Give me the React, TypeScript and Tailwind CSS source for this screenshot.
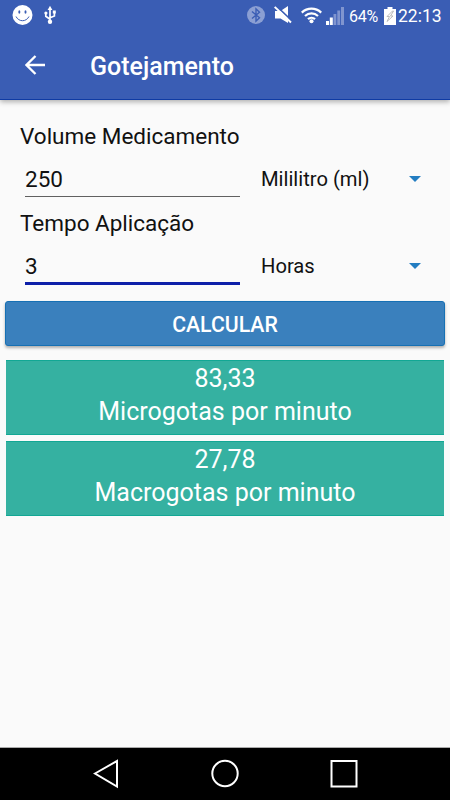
import { useState } from "react";

function StatusBar() {
  return (
    <div className="h-[30px] flex items-center text-white">
      <svg className="ml-3 mt-px" width="21" height="21" viewBox="0 0 21 21">
        <circle cx="10.5" cy="10" r="10" fill="#fff" />
        <ellipse cx="7.3" cy="7" rx="1" ry="1.8" fill="#3a5db4" />
        <ellipse cx="13.5" cy="7" rx="1" ry="1.8" fill="#3a5db4" />
        <path d="M4 11.5c2.8 5.6 10.2 5.6 13 0" fill="none" stroke="#3a5db4" strokeWidth="1" />
      </svg>
      <svg className="ml-[11px]" width="12" height="20" viewBox="0 0 12 20">
        <path d="M6 4v13M1.8 8v3.2L6 14.2M10.4 7v4L6 12.8" fill="none" stroke="#fff" strokeWidth="1.7" />
        <path d="M6 .8l2.4 4.2H3.6z" fill="#fff" />
        <circle cx="6" cy="16.8" r="2.2" fill="#fff" />
        <circle cx="1.9" cy="8" r="1.6" fill="#fff" />
        <path d="M8.8 5.5h3v3h-3z" fill="#fff" />
      </svg>

      <svg className="ml-auto" width="18" height="18" viewBox="0 0 18 18">
        <circle cx="9" cy="9" r="9" fill="#8b9fd3" />
        <path d="M5 5.5l7.5 6.3L9 15.200V2.800l3.500 3.400L5 12.500" fill="none" stroke="#3a5db4" strokeWidth="1.4" />
      </svg>
      <svg className="ml-[9px]" width="18" height="18" viewBox="0 0 18 18">
        <path d="M1 5h5.500L14 0v17L6.500 12.500H1z" fill="#fff" />
        <path d="M2-.4l16 15.200" stroke="#3a5db4" strokeWidth="1.600" />
        <path d="M.7.9l16.300 15.600" stroke="#fff" strokeWidth="2" />
      </svg>
      <svg className="ml-[9px]" width="21" height="17" viewBox="0 0 21 17">
        <path d="M.8 5.600c5.600-5.200 13.800-5.200 19.400 0M4 9c3.800-3.500 9.200-3.500 13 0M7 12.200c2-1.900 5-1.900 7 0" fill="none" stroke="#fff" strokeWidth="2.300" />
        <circle cx="10.500" cy="14.200" r="2" fill="#fff" />
      </svg>
      <svg className="ml-[4px] mt-px" width="18" height="18" viewBox="0 0 18 18">
        <path d="M0 14h3v4H0zM3.800 10.500h3V18h-3z" fill="#fff" />
        <path d="M7.500 7h2.800v11H7.500zM11.300 3.500h2.800V18h-2.800zM15 0h3v18h-3z" fill="#8095cf" />
      </svg>
      <span className="ml-[5px] w-[30px] text-[16px] tracking-[-0.3px] mt-[3px]">64%</span>
      <svg className="ml-[5px] mt-px" width="12" height="18" viewBox="0 0 12 18">
        <path d="M3.500 0h5v2H12v16H0V2h3.500z" fill="#fff" />
        <path d="M8.500 4L3 9.500h2.500L3 14.500 9 9H6.500l3-5z" fill="none" stroke="#b4b4b4" strokeWidth=".9" />
      </svg>
      <span className="ml-[2px] mr-[9px] w-[43px] text-[17.500px] mt-[2px]">22:13</span>
    </div>
  );
}

type FieldProps = {
  label: string;
  value: string;
  unit: string;
  focused?: boolean;
  onChange: (v: string) => void;
};

function Field({ label, value, unit, focused, onChange }: FieldProps) {
  return (
    <div className="h-[87px] pl-5">
      <label className="block h-[30px] leading-[28px] text-[22.500px]">{label}</label>
      <div className="flex h-[57px]">
        <div className="w-[220px] ml-[5px]">
          <input
            className={
              focused
                ? "block w-[215px] h-[46px] pt-[10px] text-[22.500px] outline-none border-b-[3px] border-[#0d1fa8]"
                : "block w-[215px] h-[45px] pt-[10px] text-[22.500px] outline-none border-b border-[#606060]"
            }
            value={value}
            onChange={(e) => onChange(e.target.value)}
          />
        </div>
        <div className="w-[160px] ml-4 pt-[11px] h-[43px] flex items-center justify-between text-[20.200px]">
          <span>{unit}</span>
          <svg width="12" height="6" viewBox="0 0 12 6">
            <path d="M0 0h12L6 6z" fill="#237dc1" />
          </svg>
        </div>
      </div>
    </div>
  );
}

function Result({ value, label }: { value: string; label: string }) {
  return (
    <div className="h-[75px] mx-[6px] bg-[#35b1a1] border-y border-[#12a794] text-white text-center text-[25px]">
      <p className="h-[34px] leading-[35px]">{value}</p>
      <p className="h-[34px] leading-[34px]">{label}</p>
    </div>
  );
}

export default function App() {
  const [volume, setVolume] = useState("250");
  const [tempo, setTempo] = useState("3");

  return (
    <div className="w-[450px] h-[800px] flex flex-col bg-[#fafafa] text-[#111] font-['Roboto',sans-serif]">
      <header className="h-[100px] bg-[#3a5db4] border-b border-[#0f3ba4] shadow-[0_2px_5px_rgba(0,0,0,0.3)]">
        <StatusBar />
        <div className="h-[70px] flex items-center text-white">
          <svg className="ml-[25px]" width="20" height="20" viewBox="0 0 20 20">
            <path d="M20 10H2M10.500 1L1.500 10l9 9" fill="none" stroke="#fff" strokeWidth="2.300" />
          </svg>
          <h1 className="ml-[45px] mt-[3px] text-[25px] font-medium">Gotejamento</h1>
        </div>
      </header>

      <main className="flex-1 pt-[22px]">
        <Field label="Volume Medicamento" value={volume} unit="Mililitro (ml)" onChange={setVolume} />
        <Field label="Tempo Aplicação" value={tempo} unit="Horas" focused onChange={setTempo} />
        <button className="block w-[440px] h-[45px] ml-[5px] mt-[5px] mb-[14px] pt-[3px] rounded-[3px] bg-[#3a80bd] border border-[#1670b4] text-white text-[21.250px] font-medium shadow-[0_2px_3px_rgba(0,0,0,0.3)]">
          CALCULAR
        </button>
        <div className="flex flex-col gap-[6px]">
          <Result value="83,33" label="Microgotas por minuto" />
          <Result value="27,78" label="Macrogotas por minuto" />
        </div>
      </main>

      <nav className="h-[53px] bg-black border-t border-[#aaa]">
        <svg width="450" height="52" viewBox="0 0 450 52" fill="none" stroke="#fff" strokeWidth="2">
          <path d="M95 25.500L117 13v25.500z" />
          <circle cx="225" cy="25.500" r="12.700" />
          <path d="M331.500 13h25v25.500h-25z" />
        </svg>
      </nav>
    </div>
  );
}
